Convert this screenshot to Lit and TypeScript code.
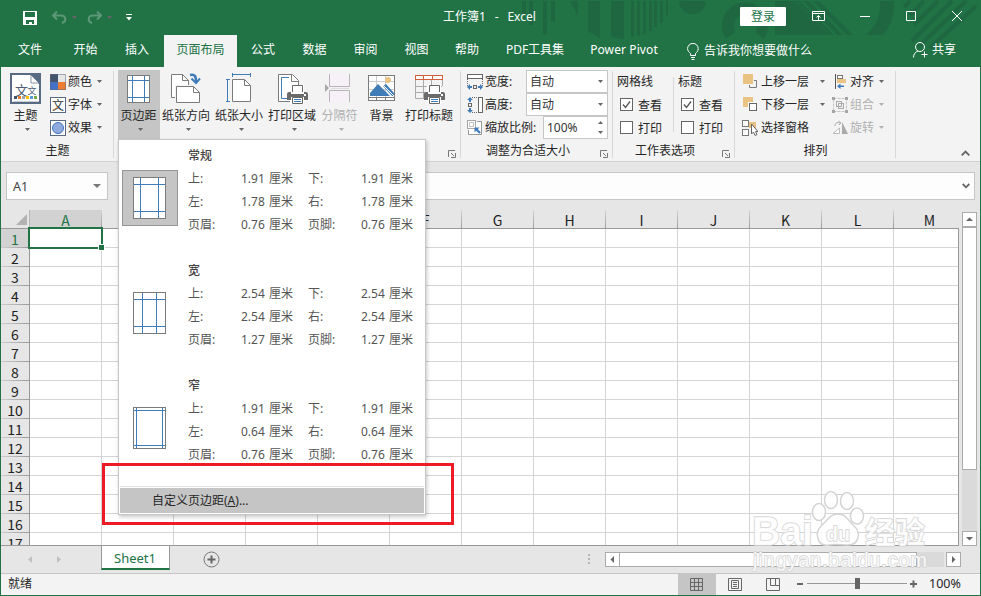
import { LitElement, html, svg, css, nothing, TemplateResult } from "lit";
import { customElement, property } from "lit/decorators.js";
import { classMap } from "lit/directives/class-map.js";

type Cell = [string, string, string, string];
interface Preset { name: string; rows: Cell[]; inset: [number, number, number, number]; selected?: boolean; }

const PRESETS: Preset[] = [
  { name: "常规", inset: [7, 25, 7, 34], selected: true, rows: [["上:", "1.91", "下:", "1.91"], ["左:", "1.78", "右:", "1.78"], ["页眉:", "0.76", "页脚:", "0.76"]] },
  { name: "宽", inset: [9, 23, 7, 34], rows: [["上:", "2.54", "下:", "2.54"], ["左:", "2.54", "右:", "2.54"], ["页眉:", "1.27", "页脚:", "1.27"]] },
  { name: "窄", inset: [3, 29, 3, 38], rows: [["上:", "1.91", "下:", "1.91"], ["左:", "0.64", "右:", "0.64"], ["页眉:", "0.76", "页脚:", "0.76"]] },
];

const TABS: { label: string; cls: string }[] = [
  { label: "文件", cls: "w58" }, { label: "开始", cls: "w53" }, { label: "插入", cls: "w52 nudge" },
  { label: "页面布局", cls: "w73 active" }, { label: "公式", cls: "w52" }, { label: "数据", cls: "w51" },
  { label: "审阅", cls: "w51" }, { label: "视图", cls: "w51" }, { label: "帮助", cls: "w50" },
  { label: "PDF工具集", cls: "w86" }, { label: "Power Pivot", cls: "w94 pivot" },
];

const arrow = (cls = "") => html`<svg class="arrow ${cls}" width="5" height="3" viewBox="0 0 5 3"><path d="M0 0h5L2.5 3z" fill="currentColor" /></svg>`;
const icon = (w: number, h: number, body: TemplateResult | unknown) => html`<svg class="ico" width=${w} height=${h} viewBox="0 0 ${w} ${h}" fill="none">${body}</svg>`;

const printer = (x: number, y: number) => svg`<g transform="translate(${x} ${y})">
  <path d="M3 0h14v7h4v9h-4v4H3v-4H0z" fill="#fff" />
  <path d="M5.500 7V.5h10V7" fill="#fff" stroke="#666" />
  <path d="M0 9q0-2 2-2h2v2h13V7h2q2 0 2 2v6h-4v-3H4v3H0z" fill="#6b6b6b" /><rect x="17" y="9" width="2" height="2" fill="#fff" />
  <path d="M5.500 12.500h10v6h-10z" fill="#fff" stroke="#666" /><path d="M7 14.500h7M7 16.500h7" stroke="#3f7cb8" /></g>`;

const bigIcons: Record<string, unknown> = {
  theme: svg`<rect x="1" y="2" width="29" height="29" fill="#fff" stroke="#596b82" stroke-width="2" />
    <path d="M21 3h8v9z" fill="#596b82" /><path d="M21 3v8h8z" fill="#fff" stroke="#596b82" stroke-width=".7" /><path d="M3 29.500h26" stroke="#c6ccd4" />
    <text x="5" y="22.500" class="glyph" font-size="13" fill="#4d5d73">文</text><text x="17.500" y="22" class="glyph" font-size="9" fill="#4d5d73">文</text>
    <path d="M4 24h3v3H4z" fill="#44546a" /><path d="M8 24h3v3H8z" fill="#ed7d31" /><path d="M12 24h3v3h-3z" fill="#a5a5a5" /><path d="M16 24h3v3h-3z" fill="#ffc000" /><path d="M20 24h3v3h-3z" fill="#5b9bd5" /><path d="M24 24h3v3h-3z" fill="#70ad47" />`,
  margins: svg`<rect x="4.500" y="3.500" width="22" height="27" fill="#fff" stroke="#7b7b7b" /><path d="M9.500 4v26M21.500 4v26M5 8.500h21M5 25.500h21" stroke="#3f7cb8" />`,
  orient: svg`<path d="M.5 2.500h11l6 6v17h-17z" fill="#fff" stroke="#7b7b7b" /><path d="M11.500 2.500v6h6" stroke="#7b7b7b" />
    <path d="M4 13h20v18H4z" fill="#f3f3f3" /><path d="M5.500 14.500h17l6 6V30.500h-23z" fill="#fff" stroke="#7b7b7b" /><path d="M22.500 14.500v6h6" stroke="#7b7b7b" />
    <path d="M19 3c5-1 6 1 6 7" stroke="#3f7cb8" stroke-width="2.500" /><path d="M20.500 6.500l4.500 4.500 4-4.500" stroke="#3f7cb8" stroke-width="2" />`,
  size: svg`<path d="M8.500 7.500h12l6 6v16h-18z" fill="#fff" stroke="#7b7b7b" /><path d="M20.500 7.500v6h6" stroke="#7b7b7b" /><path d="M8.500 1v4M8 2.500h19M26.500 1v4M2 7.500h4M3.500 7v23M2 29.500h4" stroke="#3f7cb8" />`,
  area: svg`<path d="M1.500 2.500h14l6 6v21h-20z" fill="#fff" stroke="#7b7b7b" /><path d="M14.500 2.500v7h7" stroke="#7b7b7b" /><path d="M12 5.500H4.500v21H10" stroke="#3f7cb8" />${printer(10, 13)}`,
  breaks: svg`<path d="M5.500 2v12.500h20V2" fill="#f6f1f7" stroke="#b9b3ba" /><path d="M5.500 30V18.500h20V30" fill="#f6f1f7" stroke="#b9b3ba" /><path d="M1 12l4 4-4 4z" fill="#a5a5a5" /><path d="M7 16.500h18" stroke="#dcdcdc" />`,
  back: svg`<rect x="2.500" y="3.500" width="26" height="25" fill="#fff" stroke="#7b7b7b" /><path d="M10.500 4v24M19.500 4v24M3 9.500h25M3 17.500h25" stroke="#ccc" /><circle cx="22" cy="8" r="3" fill="#eac282" />
    <path d="M4 24v-3l8-9 12 12z" fill="#3f7cb8" /><path d="M17 14l3-2 8 9v3h-2z" fill="#3f7cb8" /><path d="M17 13l11 11" stroke="#fff" /><path d="M3 25.500h25" stroke="#7b7b7b" /><path d="M10.500 26v2M19.500 26v2" stroke="#7b7b7b" />`,
  titles: svg`<path d="M1.500 8v18.500H12M9.500 8v18M17.500 8v6M28.500 8v6M2 14.500h26M2 20.500h9" stroke="#aaa" /><rect x="1.500" y="3.500" width="27" height="4" fill="#fff" stroke="#d2603b" /><path d="M9.500 4v4M18.500 4v4" stroke="#d2603b" />${printer(10, 13)}`,
};

const smallIcons: Record<string, unknown> = {
  colors: svg`<path d="M0 0h8v8H0z" fill="#44546a" /><path d="M8 0h8v8H8z" fill="#e7e6e6" /><path d="M0 8h8v8H0z" fill="#4472c4" /><path d="M8 8h8v8H8z" fill="#ed7d31" /><path d="M.5.5h15v15H.5z" stroke="#596b82" stroke-opacity=".5" />`,
  fonts: svg`<rect x=".5" y=".5" width="15" height="15" fill="#fff" stroke="#596b82" /><text x="2" y="12.500" class="glyph" font-size="12" fill="#333">文</text><path d="M4 13l4-3" stroke="#ed7d31" /><path d="M9 10l3 3" stroke="#3f7cb8" />`,
  effects: svg`<rect x=".5" y=".5" width="15" height="15" fill="#fff" stroke="#596b82" /><circle cx="8" cy="8" r="5.500" fill="#8faadc" stroke="#4472c4" />`,
  width: svg`<rect x=".5" y=".5" width="15" height="4" fill="#fff" stroke="#666" /><path d="M.5 5v7M15.500 5v7" stroke="#666" stroke-dasharray="1 1" /><rect x="6.500" y="11.500" width="3" height="3" stroke="#666" /><path d="M0 13l3-3v2h2v2H3v2zM16 13l-3-3v2h-2v2h2v2z" fill="#3f7cb8" />`,
  height: svg`<rect x="11.500" y=".5" width="4" height="15" fill="#fff" stroke="#666" /><path d="M5 .5h6M5 15.500h6" stroke="#666" stroke-dasharray="1 1" /><rect x="1.500" y="6.500" width="3" height="3" stroke="#666" /><path d="M3 0L0 3h2v2h2V3h2zM3 16l-3-3h2v-2h2v2h2z" fill="#3f7cb8" />`,
  scale: svg`<path d="M10 1.500h4.500v13h-13V10" fill="#fff" stroke="#999" /><path d="M.5.5h8v8h-8z" fill="#fff" stroke="#555" stroke-dasharray="1 1" /><path d="M2.500 2.500h4v4h-4z" stroke="#888" stroke-dasharray="1 1" /><path d="M7.500 7.500h5l-1.700 1.700 3 3-1.600 1.600-3-3-1.700 1.700z" fill="#3f7cb8" />`,
  forward: svg`<path d="M12 6.500h2.500v7h-7V11" stroke="#7b7b7b" /><path d="M1 0h10v10H1z" fill="#eac282" />`,
  backward: svg`<path d="M1 0h10v10H1z" fill="#eac282" /><path d="M6 5h9v9H6z" fill="#fff" /><rect x="7.500" y="6.500" width="7" height="7" fill="#fff" stroke="#666" />`,
  pane: svg`<path d="M7 2h7v6H7z" fill="#eac282" /><rect x=".5" y=".5" width="6" height="6" fill="#fff" stroke="#777" /><rect x=".5" y="9.500" width="6" height="6" fill="#fff" stroke="#777" /><path d="M9.500 4v10l2-2 1.500 3.500 2-1-1.500-3h2.500z" fill="#fff" stroke="#666" />`,
  align: svg`<path d="M3.500 0v15" stroke="#555" /><rect x="5.500" y="1.500" width="5" height="3" fill="#fff" stroke="#777" /><path d="M5 5h9v4H5z" fill="#eac282" /><path d="M5 12.300L8.500 9.500v2H12V13H8.500v2z" fill="#3f7cb8" />`,
  group: svg`<path d="M1.500 1.500h13v13h-13z" stroke="#c4c4c4" stroke-dasharray="3 1" /><rect x="4.500" y="4.500" width="5" height="5" stroke="#aaa" /><rect x="6.500" y="6.500" width="5" height="5" stroke="#aaa" /><path d="M0 0h3v3H0zM13 0h3v3h-3zM0 13h3v3H0zM13 13h3v3h-3z" fill="#a5a5a5" />`,
  rotate: svg`<path d="M1 13.500L7.500 8v5.500z" stroke="#bbb" fill="#fff" /><path d="M10 2v12h6z" fill="#a9a9a9" /><path d="M3 6c0-3 2-4 5-3M6.500 1L9 3 7 5" stroke="#aaa" />`,
};

@customElement("ribbon-button")
class RibbonButton extends LitElement {
  @property() icon = "";
  @property() label = "";
  @property({ type: Boolean }) plain = false;
  static styles = css`
    :host { display: flex; flex-direction: column; align-items: center; height: 69px; font-size: 12px; color: #262626; white-space: nowrap; }
    svg { display: block; flex: none; }
    .ico { margin-top: 2px; }
    :host(.w53) .ico { margin-left: 1px; }
    .label { line-height: 16px; margin-top: 4px; margin-right: 1px; }
    .arrow { margin-top: 4px; margin-left: 3px; color: #666; }
    .glyph { font-family: "Noto Sans CJK SC", sans-serif; }
    :host([dim]) .label, :host([dim]) .arrow { color: #b1b1b1; }
  `;
  render() {
    return html`${icon(32, 32, bigIcons[this.icon])}<span class="label">${this.label}</span>${this.plain ? nothing : arrow()}`;
  }
}

@customElement("margins-menu")
class MarginsMenu extends LitElement {
  static styles = css`
    :host { display: block; box-sizing: border-box; width: 308px; height: 376px; background: #fff; border: 1px solid #c6c6c6; box-shadow: 1px 2px 4px rgba(0,0,0,.22); font-size: 12px; color: #555; padding: 4px 1px 1px 3px; }
    .preset { display: grid; grid-template-columns: 56px 1fr; column-gap: 10px; height: 115px; }
    .thumb { width: 54px; height: 54px; margin-top: 26px; border: 1px solid transparent; display: flex; align-items: center; justify-content: center; }
    .thumb svg { display: block; margin-left: -1px; }
    .thumb.on { background: #c5c5c5; border-color: #969696; }
    .grid { display: grid; grid-template-columns: 53px 67px 53px 56px; grid-auto-rows: 23px; line-height: 23px; word-spacing: 1px; }
    .name { grid-column: 1 / -1; color: #444; font-weight: 500; line-height: 24px; }
    .sep { height: 1px; background: #e1e1e1; margin: -3px 0 0 -2px; }
    .custom { height: 25px; line-height: 25px; margin: 1px 0 0 -2px; background: #c5c5c5; padding-left: 32px; color: #262626; }
    .list { height: 345px; }
  `;
  render() {
    return html`<div class="list">${PRESETS.map((p) => {
      const [l, r, t, b] = p.inset;
      return html`<div class="preset"><div class=${classMap({ thumb: true, on: !!p.selected })}>
        <svg width="33" height="42" viewBox="0 0 33 42" fill="none"><rect x=".5" y=".5" width="32" height="41" fill="#fff" stroke="#7b7b7b" />
        <path d="M${l + 0.5} 1v40M${r + 0.5} 1v40M1 ${t + 0.5}h31M1 ${b + 0.5}h31" stroke="#3f7cb8" /></svg></div>
        <div class="grid"><span class="name">${p.name}</span>
        ${p.rows.map((c) => html`<span>${c[0]}</span><span>${c[1]} 厘米</span><span>${c[2]}</span><span>${c[3]} 厘米</span>`)}</div></div>`;
    })}</div><div class="sep"></div><div class="custom">自定义页边距(<u>A</u>)...</div>`;
  }
}

@customElement("app-root")
class AppRoot extends LitElement {
  static styles = css`
    :host { display: block; position: relative; width: 981px; height: 596px; overflow: hidden; font: 12px "Noto Sans", "Noto Sans CJK SC", sans-serif; color: #262626; white-space: nowrap; }
    * { box-sizing: border-box; }
    svg { display: block; flex: none; }
    .glyph { font-family: "Noto Sans CJK SC", sans-serif; }
    .window { display: flex; flex-direction: column; height: 596px; border: 1px solid #217346; border-top: 0; background: #e6e6e6; }
    .head { position: relative; flex: none; height: 67px; background: #217346; color: #fff; margin: 0 -1px; padding: 0 1px; }
    .decor { position: absolute; left: 0; top: 0; }
    .title { position: relative; height: 35px; display: flex; align-items: center; }
    .quick { display: flex; align-items: center; width: 442px; padding-left: 22px; }
    .quick svg:nth-child(2) { margin-left: 15px; } .quick svg:nth-child(3) { margin-left: 5px; } .quick svg:nth-child(4) { margin-left: 10px; } .quick svg:nth-child(5) { margin-left: 5px; } .quick svg:nth-child(6) { margin-left: 14px; }
    .faded { color: #5c9877; }
    .doc { width: 297px; line-height: 32px; height: 33px; white-space: pre; word-spacing: 1.300px; }
    .login { width: 46px; height: 19px; margin-top: -3px; background: #fff; border-radius: 1px; color: #217346; line-height: 20px; text-align: center; }
    .controls { display: flex; align-items: center; margin-top: -3px; }
    .controls svg:nth-child(1) { margin-left: 26px; } .controls svg:nth-child(2) { margin-left: 35px; } .controls svg:nth-child(3) { margin-left: 36px; } .controls svg:nth-child(4) { margin-left: 36px; }
    .tabs { position: relative; display: flex; height: 32px; line-height: 30px; text-align: center; }
    .w50 { width: 50px; } .w51 { width: 51px; } .w52 { width: 52px; } .w53 { width: 53px; } .w58 { width: 58px; } .w73 { width: 73px; } .w86 { width: 86px; } .w94 { width: 94px; }
    .w42 { width: 42px; }
    .nudge, .pivot { padding-right: 2px; }
    .pivot { letter-spacing: .1px; }
    .active { background: #f3f3f3; color: #217346; }
    .tell { display: flex; align-items: center; gap: 5px; padding-left: 15px; height: 32px; width: 241px; }
    .share { display: flex; align-items: center; gap: 4px; height: 29px; }
    .ribbon { display: flex; flex: none; height: 95px; background: #f3f3f3; border-bottom: 1px solid #d2d2d2; padding-top: 3px; }
    .group { position: relative; display: flex; flex-direction: column; height: 91px; }
    .group::after { content: ""; position: absolute; right: 0; top: 1px; width: 1px; height: 87px; background: #d8d8d8; }
    .body { height: 69px; display: flex; }
    .foot { display: flex; justify-content: center; height: 22px; line-height: 24px; }
    .foot.inset { padding-right: 18px; }
    .launch { position: absolute; right: 5px; bottom: 3px; }
    .g1 { width: 113px; } .g2 { width: 347px; } .g3 { width: 152px; } .g4 { width: 122px; } .g5 { width: 161px; }
    .g2 .body { padding-left: 4px; }
    .pressed { background: #c5c5c5; }
    .g1 ribbon-button { width: 48px; margin-left: 1px; }
    .stack { display: grid; grid-template-rows: repeat(3, 23px); }
    .row { display: flex; align-items: center; gap: 2px; line-height: 23px; }
    .arrow { color: #666; }
    .row .arrow { margin-left: 3px; }
    .dim, .dim .arrow { color: #b1b1b1; }
    .g3 .body { padding-left: 6px; }
    .g3 .row > span { width: 39px; }
    .select { display: flex; align-items: center; justify-content: space-between; width: 82px; height: 23px; border: 1px solid #c6c6c6; background: #fff; padding: 0 4px 0 3px; line-height: 20px; margin-left: 0; color: #333; }
    .g3 .row > .spin { width: 65px; margin-left: 17px; }
    .spin .ud { display: flex; flex-direction: column; gap: 7px; }
    .row .select .arrow { margin: 0; }
    .flip { transform: rotate(180deg); }
    .g4 .body { padding-left: 4px; }
    .g4 .stack:first-child { width: 57px; height: 69px; position: relative; }
    .g4 .stack:first-child::after { content: ""; position: absolute; right: 0; top: 7px; width: 1px; height: 55px; background: #d8d8d8; }
    .g4 .stack:last-child { padding-left: 4px; }
    .check { display: flex; align-items: center; gap: 5px; padding-left: 3px; }
    .g5 .body { padding-left: 7px; }
    .g5 .stack:first-child { width: 90px; }
    .g5 .stack:first-child .row span { width: 54px; margin-left: 1px; }
    .collapse { margin: 80px 0 0 65px; }
    .formula { display: flex; flex: none; height: 48px; padding: 10px 5px 0; }
    .name { display: flex; align-items: center; justify-content: space-between; width: 102px; height: 28px; background: #fdfdfd; border: 1px solid #c6c6c6; padding: 0 6px; color: #444; font-size: 12.500px; }
    .fx { display: flex; align-items: center; justify-content: flex-end; margin-left: 80px; flex: 1; height: 28px; background: #fdfdfd; border: 1px solid #c6c6c6; padding-right: 4px; }
    .sheet { display: flex; flex: none; height: 336px; }
    .table { display: grid; grid-template-columns: 29px 929px; grid-template-rows: 19px 317px; width: 958px; position: relative; font-family: "Noto Sans CJK SC", sans-serif; font-size: 14px; color: #222; }
    .corner { border-right: 1px solid #b5b5b5; border-bottom: 1px solid #999; display: flex; align-items: flex-end; justify-content: flex-end; padding: 0 2px 3px 0; }
    .cols { display: flex; overflow: hidden; border-bottom: 1px solid #999; }
    .col { width: 72px; flex: none; text-align: center; line-height: 20px; border-right: 1px solid; border-image: linear-gradient(#d8d8d8, #999) 1; }
    .col.on, .rowno.on { background: #d2d2d2; color: #217346; }
    .rows { overflow: hidden; border-right: 1px solid #999; border-bottom: 1px solid #999; }
    .rowno { height: 19px; line-height: 20px; text-align: center; border-bottom: 1px solid; border-image: linear-gradient(90deg, #d0d0d0, #999) 1; }
    .cells { border-right: 1px solid #999; border-bottom: 1px solid #999; background-color: #fff; background-image: linear-gradient(90deg, transparent 71px, #d4d4d4 71px), linear-gradient(transparent 18px, #d4d4d4 18px); background-size: 72px 19px; }
    .cursor { position: absolute; left: 27px; top: 17px; width: 75px; height: 22px; border: 2px solid #217346; }
    .cursor::after { content: ""; position: absolute; right: -4px; bottom: -4px; width: 5px; height: 5px; background: #217346; border: 1px solid #fff; }
    .vbar { display: flex; flex-direction: column; width: 15px; margin-left: 3px; padding-top: 2px; }
    .sb { display: flex; align-items: center; justify-content: center; width: 15px; height: 15px; background: #fff; border: 1px solid #ababab; flex: none; }
    .vbar .thumb { height: 243px; background: #fff; border: 1px solid #ababab; }
    .vbar .track { flex: 1; background: #dadada; }
    .bottom { display: flex; flex: none; height: 28px; border-bottom: 1px solid #c6c6c6; }
    .nav { display: flex; width: 100px; padding: 10px 0 0 26px; gap: 22px; }
    .sheettab { width: 69px; height: 25px; margin-top: -1px; background: #fff; border-left: 1px solid #999; border-right: 1px solid #999; border-bottom: 2px solid #217346; color: #217346; text-align: center; line-height: 26px; font-size: 13px; padding-right: 1px; }
    .add { margin: 5px 0 0 33px; }
    .dots { margin: 8px 15px 0 368px; }
    .hbar { display: flex; width: 356px; padding-top: 6px; }
    .hbar .thumb { width: 298px; margin-left: -1px; height: 15px; background: #fff; border: 1px solid #ababab; }
    .hbar .track { width: 27px; height: 15px; background: #dadada; margin-right: 2px; }
    .status { display: flex; flex: 1; background: #f3f3f3; line-height: 20px; }
    .ready { width: 677px; padding-left: 7px; }
    .view { width: 38px; display: flex; align-items: center; justify-content: center; }
    .view.pressed { padding-right: 1px; }
    .zoom { display: flex; align-items: center; margin-left: 5px; height: 19px; }
    .pct { margin-left: 11px; font-size: 12.500px; }
    margins-menu { position: absolute; left: 118px; top: 139px; }
    .frame { position: absolute; left: 102px; top: 463px; width: 352px; height: 62px; border: 3px solid #ed1c24; }
    .mark { position: absolute; left: 745px; top: 485px; }
    .mark text { font-family: "Liberation Sans", "Noto Sans CJK SC", sans-serif; paint-order: stroke; }
  `;

  private group(cls: string, title: string, body: TemplateResult, launch = false) {
    return html`<div class="group ${cls}"><div class="body">${body}</div><div class=${classMap({ foot: true, inset: launch })}>${title}</div>
      ${launch ? html`<svg class="launch" width="8" height="8" viewBox="0 0 8 8" fill="none"><path d="M.5 7V.5H7M3 3l3 3M7.500 3v4.500H3" stroke="#777" /></svg>` : nothing}</div>`;
  }
  private row(ic: string, label: string, drop = true, dim = false) {
    return html`<div class="row ${dim ? "dim" : ""}">${icon(16, 16, smallIcons[ic])}<span>${label}</span>${drop ? arrow() : nothing}</div>`;
  }
  private check(label: string, on: boolean) {
    return html`<div class="check"><svg width="13" height="13" viewBox="0 0 13 13" fill="none"><rect x=".5" y=".5" width="12" height="12" fill="#fff" stroke="#666" />
      ${on ? svg`<path d="M3 6.500l2.500 3L10 3.500" stroke="#555" stroke-width="1.300" />` : nothing}</svg><span>${label}</span></div>`;
  }

  private head() {
    return html`<div class="head">
      <svg class="decor" width="981" height="67" viewBox="0 0 981 67" fill="none">
        <g fill="#1e6740"><path d="M522 1h4v14h-4zM529 1h4v24h-4zM543 1h4v33h-4zM551 1h4v21h-4zM570 1h8v15zM588 1h12v37l-12-7zM611 1h13v38q-7 0-13-3z" />
        <path d="M631 1h3v36h-3zM637 1h3v35h-3zM643 1h3v33h-3zM649 1h3v30h-3zM654 1h3v26h-3zM660 1h3v22h-3zM666 1h2v14h-2z" />
        <path d="M679 1h27a13.500 13 0 0 1-27 0z" /><path d="M775 1h20l34 34h-54zM803 1h6l34 34h-6zM813 1h6l34 34h-6zM796 1h4l34 34h-4z" />
        <path d="M880 1h14q1 20-11 34h-17q15-13 14-34z" /></g>
        <path d="M731 35a17 17 0 1 1 28 0" stroke="#1e6740" stroke-width="12" /><path d="M739 35a9 9 0 1 1 13 0" stroke="#217346" stroke-width="4" /><circle cx="745" cy="28" r="5" fill="#217346" />
        <g stroke="#1e6740" stroke-width="4"><path d="M910 1l-6 6M924 1l-14 14M938 1l-24 24M952 1l-40 40M966 1l-48 46M976 6l-46 42" /></g>
      </svg>
      <div class="title">
        <div class="quick">
          <svg width="14" height="14" viewBox="0 0 14 14"><path d="M0 0h14v14H0z" fill="#fff" /><path d="M2 1h10v5H2zM3 9h8v4H9v-2H6v2H3z" fill="#217346" /></svg>
          <svg class="faded" width="15" height="13" viewBox="0 0 15 13" fill="none"><path d="M5 .5L1 4.500l4 4M1 4.500h8c5 0 6 6 1 7.500" stroke="currentColor" stroke-width="2" /></svg>
          ${arrow("faded")}
          <svg class="faded" width="15" height="13" viewBox="0 0 15 13" fill="none"><path d="M10 .5l4 4-4 4M14 4.500H6C1 4.500 0 10.500 5 12" stroke="currentColor" stroke-width="2" /></svg>
          ${arrow("faded")}
          <svg width="6" height="7" viewBox="0 0 6 7"><path d="M0 0h6v1H0zM0 3h6L3 6.500z" fill="#fff" /></svg>
        </div>
        <div class="doc">工作簿1  -  Excel</div>
        <div class="login">登录</div>
        <div class="controls">
          <svg width="13" height="10" viewBox="0 0 13 10" fill="none"><path d="M.5.5h12v9H.5zM1 2.500h11M6.500 9V4.500M4.500 6.500l2-2 2 2" stroke="#fff" /></svg>
          <svg width="10" height="10" viewBox="0 0 10 10"><path d="M0 5h10v1H0z" fill="#fff" /></svg>
          <svg width="10" height="10" viewBox="0 0 10 10"><path d="M.5.5h9v9h-9z" fill="none" stroke="#fff" /></svg>
          <svg width="10" height="10" viewBox="0 0 10 10"><path d="M0 0l10 10M10 0L0 10" stroke="#fff" /></svg>
        </div>
      </div>
      <div class="tabs">${TABS.map((t) => html`<div class=${t.cls}>${t.label}</div>`)}
        <div class="tell"><svg width="12" height="17" viewBox="0 0 12 17" fill="none"><path d="M3.500 12.500v-2C2 9 .6 8 .6 5.500a5.200 5 0 0 1 10.600 0C11.200 8 10 9 8.500 10.500v2zM4 14.500h4M4.500 16.500h3" stroke="#fff" /></svg>告诉我你想要做什么</div>
        <div class="share"><svg width="15" height="16" viewBox="0 0 15 16" fill="none"><circle cx="7" cy="5" r="4.500" stroke="#fff" /><path d="M.5 15.500C.5 12 2.500 10 5 9M11.500 9.500v6M8.500 12.500h6" stroke="#fff" /></svg>共享</div>
      </div>
    </div>`;
  }

  private ribbon() {
    const b = (cls: string, ic: string, label: string, plain = false, dim = false) => html`<ribbon-button class=${cls} icon=${ic} label=${label} ?plain=${plain} ?dim=${dim}></ribbon-button>`;
    return html`<div class="ribbon">
      ${this.group("g1", "主题", html`${b("", "theme", "主题")}<div class="stack">${this.row("colors", "颜色")}${this.row("fonts", "字体")}${this.row("effects", "效果")}</div>`)}
      ${this.group("g2", "", html`${b("w42 pressed", "margins", "页边距")}${b("w53", "orient", "纸张方向")}${b("w53", "size", "纸张大小")}${b("w53", "area", "打印区域")}${b("w42", "breaks", "分隔符", false, true)}${b("w42", "back", "背景", true)}${b("w53", "titles", "打印标题", true)}`, true)}
      ${this.group("g3", "调整为合适大小", html`<div class="stack">
        <div class="row">${icon(16, 16, smallIcons.width)}<span>宽度:</span><div class="select">自动${arrow()}</div></div>
        <div class="row">${icon(16, 16, smallIcons.height)}<span>高度:</span><div class="select">自动${arrow()}</div></div>
        <div class="row">${icon(16, 16, smallIcons.scale)}<span>缩放比例:</span><div class="select spin">100%<div class="ud">${arrow("flip")}${arrow()}</div></div></div></div>`, true)}
      ${this.group("g4", "工作表选项", html`<div class="stack"><div class="row">网格线</div>${this.check("查看", true)}${this.check("打印", false)}</div>
        <div class="stack"><div class="row">标题</div>${this.check("查看", true)}${this.check("打印", false)}</div>`, true)}
      ${this.group("g5", "排列", html`<div class="stack">${this.row("forward", "上移一层")}${this.row("backward", "下移一层")}${this.row("pane", "选择窗格", false)}</div>
        <div class="stack">${this.row("align", "对齐")}${this.row("group", "组合", true, true)}${this.row("rotate", "旋转", true, true)}</div>`)}
      <svg class="collapse" width="9" height="6" viewBox="0 0 9 6" fill="none"><path d="M.7 5.300l3.800-3.800 3.800 3.800" stroke="#666" stroke-width="1.800" /></svg>
    </div>`;
  }

  render() {
    const tri = (d: string, c = "#666") => html`<svg width="7" height="7" viewBox="0 0 7 7"><path d=${d} fill=${c} /></svg>`;
    return html`<div class="window">
      ${this.head()}${this.ribbon()}
      <div class="formula"><div class="name">A1<svg width="8" height="4" viewBox="0 0 8 4"><path d="M0 0h8L4 4z" fill="#777" /></svg></div>
        <div class="fx"><svg width="8" height="6" viewBox="0 0 8 6" fill="none"><path d="M.7 1L4 4.300 7.300 1" stroke="#666" stroke-width="1.800" /></svg></div></div>
      <div class="sheet">
        <div class="table">
          <div class="corner"><svg width="11" height="11" viewBox="0 0 11 11"><path d="M11 0v11H0z" fill="#b2b2b2" /></svg></div>
          <div class="cols">${[..."ABCDEFGHIJKLM"].map((c, i) => html`<div class=${classMap({ col: true, on: i === 0 })}>${c}</div>`)}</div>
          <div class="rows">${Array.from({ length: 17 }, (_, i) => html`<div class=${classMap({ rowno: true, on: i === 0 })}>${i + 1}</div>`)}</div>
          <div class="cells"></div>
          <div class="cursor"></div>
        </div>
        <div class="vbar"><div class="sb">${tri("M0 5h7L3.500 1.500z")}</div><div class="thumb"></div><div class="track"></div><div class="sb">${tri("M0 2h7L3.500 5.500z")}</div></div>
      </div>
      <div class="bottom">
        <div class="nav">${tri("M5 0v7L1 3.500z", "#c0c0c0")}${tri("M1 0v7l4-3.500z", "#c0c0c0")}</div>
        <div class="sheettab">Sheet1</div>
        <svg class="add" width="17" height="17" viewBox="0 0 17 17" fill="none"><circle cx="8.500" cy="8.500" r="7.500" stroke="#777" /><path d="M8.500 4.500v8M4.500 8.500h8" stroke="#666" stroke-width="2" /></svg>
        <svg class="dots" width="2" height="11" viewBox="0 0 2 11"><path d="M0 0h2v2H0zM0 4h2v2H0zM0 8h2v2H0z" fill="#b5b5b5" /></svg>
        <div class="hbar"><div class="sb">${tri("M5 0v7L1.500 3.500z")}</div><div class="thumb"></div><div class="track"></div><div class="sb">${tri("M2 0v7l3.500-3.500z")}</div></div>
      </div>
      <div class="status"><div class="ready">就绪</div>
        <div class="view pressed"><svg width="13" height="13" viewBox="0 0 13 13" fill="none"><path d="M.5.5h12v12H.5zM4.500 1v11M8.500 1v11M1 4.500h11M1 8.500h11" stroke="#666" /></svg></div>
        <div class="view"><svg width="14" height="13" viewBox="0 0 14 13" fill="none"><path d="M.5.500h13v12H.5zM3.500 2.500h7v8h-7zM5 4.500h4M5 6.500h4M5 8.500h4" stroke="#666" /></svg></div>
        <div class="view"><svg width="14" height="13" viewBox="0 0 14 13" fill="none"><path d="M.5.500h13v12H.5zM4.500 1v6.500h5V1M9.500 7.500H13" stroke="#666" /></svg></div>
        <div class="zoom"><svg width="121" height="13" viewBox="0 0 121 13"><path d="M0 6h6v2H0zM113 6h7v2h-7zM115.500 3.500h2v7h-2z" fill="#666" /><path d="M10 6.500h100" stroke="#999" /><path d="M58 1h5v11h-5z" fill="#666" /></svg><span class="pct">100%</span></div>
      </div>
    </div>
    <margins-menu></margins-menu>
    <div class="frame"></div>
    <svg class="mark" width="200" height="100" viewBox="0 0 200 100">
      <g fill="#fff" fill-opacity=".85" stroke="#d4d4d4" stroke-width="1.500">
        <ellipse cx="74" cy="27" rx="6.500" ry="8.500" /><ellipse cx="86" cy="15" rx="6.500" ry="8.500" /><ellipse cx="102" cy="16" rx="6.500" ry="8.500" /><ellipse cx="112" cy="31" rx="6.500" ry="8" />
        <path d="M93 29c8 0 10 6 15 11 8 6 7 20-5 20-5 0-14-1-19 0-13 2-14-13-8-19 6-5 9-12 17-12z" />
        <text x="7" y="60" font-size="41" font-weight="700" textLength="61" lengthAdjust="spacingAndGlyphs">Bai</text>
        <text x="81" y="56" font-size="20" font-weight="700" textLength="24" lengthAdjust="spacingAndGlyphs">du</text>
        <text x="120" y="58" font-size="30" font-weight="700" textLength="60">经验</text>
        <text x="8" y="82" font-size="20" textLength="174" stroke-width="1.500">jingyan.baidu.com</text>
      </g>
    </svg>`;
  }
}
